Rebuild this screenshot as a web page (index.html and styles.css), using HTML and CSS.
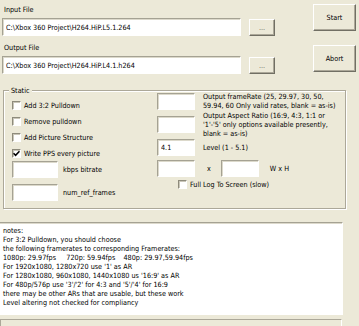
FILE: index.html
```html
<!DOCTYPE html>
<html lang="en">
<head>
    <meta charset="UTF-8">
    <title>H264 Patcher</title>
    <link rel="stylesheet" href="styles.css">
</head>
<body>
    <div class="file-block">
        <div class="file-main">
            <div class="file-label">Input File</div>
            <div class="path-row">
                <input class="textbox path" type="text" value="C:\Xbox 360 Project\H264.HiP.L5.1.264">
                <button class="btn browse" type="button">...</button>
            </div>
        </div>
        <button class="btn action" type="button">Start</button>
    </div>
    <div class="file-block">
        <div class="file-main">
            <div class="file-label">Output File</div>
            <div class="path-row">
                <input class="textbox path" type="text" value="C:\Xbox 360 Project\H264.HiP.L4.1.h264">
                <button class="btn browse" type="button">...</button>
            </div>
        </div>
        <button class="btn action abort" type="button">Abort</button>
    </div>

    <div class="group">
        <span class="group-title">Static</span>
        <div class="group-body">
            <div class="left-col">
                <label class="check"><span class="box"></span>Add 3:2 Pulldown</label>
                <label class="check"><span class="box"></span>Remove pulldown</label>
                <label class="check"><span class="box"></span>Add Picture Structure</label>
                <label class="check"><span class="box"><svg viewBox="0 0 7 7" width="7" height="7"><path d="M0.5 3.2 L2.6 5.3 L6.5 1.2" fill="none" stroke="#000" stroke-width="1.6"/></svg></span>Write PPS every picture</label>
                <div class="field"><input class="textbox small" type="text"><span>kbps bitrate</span></div>
                <div class="field second"><input class="textbox small" type="text"><span>num_ref_frames</span></div>
            </div>
            <div class="right-col">
                <div class="opt rate"><input class="textbox small" type="text"><span>Output frameRate (25, 29.97, 30, 50,<br>59.94, 60 Only valid rates, blank = as-is)</span></div>
                <div class="opt aspect"><input class="textbox small" type="text"><span>Output Aspect Ratio (16:9, 4:3, 1:1 or<br>'1'-'5' only options available presently,<br>blank = as-is)</span></div>
                <div class="opt level"><input class="textbox small" type="text" value="4.1"><span>Level (1 - 5.1)</span></div>
                <div class="opt size"><input class="textbox small" type="text"><span class="times">x</span><input class="textbox small" type="text"><span class="wh">W x H</span></div>
                <label class="check log"><span class="box"></span>Full Log To Screen (slow)</label>
            </div>
        </div>
    </div>

    <div class="notes textbox">notes:
For 3:2 Pulldown, you should choose
the following framerates to corresponding Framerates:
1080p: 29.97fps     720p: 59.94fps    480p: 29.97,59.94fps
For 1920x1080, 1280x720 use '1' as AR
For 1280x1080, 960x1080, 1440x1080 us '16:9' as AR
For 480p/576p use '3'/'2' for 4:3 and '5'/'4' for 16:9
there may be other ARs that are usable, but these work
Level altering not checked for compliancy</div>

    <div class="progress"></div>
</body>
</html>
```

FILE: styles.css
```css
* {
    box-sizing: border-box;
}
body {
    margin: 0;
    width: 359px;
    height: 326px;
    overflow: hidden;
    background: #ECE9D8;
    color: #000;
    font-family: "DejaVu Sans Condensed", "Liberation Sans", sans-serif;
    font-size: 7.2px;
    line-height: 9px;
}
input, button {
    font: inherit;
    color: #000;
    margin: 0;
}
.textbox {
    background: #fff;
    border: 1px solid;
    border-color: #A5A293 #fff #fff #A5A293;
    box-shadow: inset 1px 1px 0 #DCD9CB;
    padding: 0 3px;
    outline: none;
}
.btn {
    background: #ECE9D8;
    border: 1px solid;
    border-color: #fff #716F64 #716F64 #fff;
    box-shadow: inset -1px -1px 0 #ACA899;
    padding: 0;
    cursor: pointer;
}
.file-block {
    display: flex;
    height: 38px;
}
.file-main {
    width: 275px;
    padding-left: 2px;
}
.file-label {
    height: 18px;
    padding: 5px 0 0 2px;
}
.path-row {
    display: flex;
    gap: 8px;
}
.path {
    width: 239px;
    height: 18px;
}
.browse {
    width: 26px;
    height: 17px;
    margin-top: 1px;
    color: #666;
}
.action {
    width: 43px;
    height: 27px;
    margin: 4px 0 0 38px;
}
.abort {
    margin-top: 7px;
}

.group {
    position: relative;
    margin: 14px 13px 0 3px;
    height: 119px;
    border: 1px solid #ACA899;
    box-shadow: 1px 1px 0 #fff, inset 1px 1px 0 #fff;
}
.group-title {
    position: absolute;
    top: -5px;
    left: 5px;
    padding: 0 2px;
    background: #ECE9D8;
}
.group-body {
    display: flex;
    padding-left: 8px;
}
.left-col {
    width: 145px;
    padding-top: 6px;
}
.right-col {
    flex: 1;
    padding-top: 1px;
    white-space: nowrap;
}
.check {
    display: flex;
    align-items: center;
    gap: 3px;
    height: 16px;
}
.box {
    display: flex;
    align-items: center;
    justify-content: center;
    width: 9px;
    height: 9px;
    background: #fff;
    border: 1px solid;
    border-color: #8E8B7C #fff #fff #8E8B7C;
    box-shadow: inset 1px 1px 0 #C9C6B8;
}
.field {
    display: flex;
    align-items: center;
    gap: 5px;
    height: 17px;
}
.field.second {
    margin-top: 6px;
}
.small {
    width: 46px;
    height: 17px;
}
.opt {
    display: flex;
    align-items: center;
    gap: 8px;
}
.opt .small {
    width: 38px;
    flex: none;
}
.rate {
    height: 18px;
}
.aspect {
    height: 27px;
    margin-top: 1px;
}
.level {
    height: 17px;
    margin-top: 1px;
}
.size {
    height: 17px;
    margin-top: 4px;
    gap: 0;
}
.times {
    margin: 0 10px 0 12px;
}
.wh {
    margin-left: 11px;
}
.check.log {
    margin-top: 1px;
    padding-left: 21px;
    height: 13px;
}

.notes {
    margin: 13px 0 0 -2px;
    width: 345px;
    height: 93px;
    padding: 3px 0 0 4px;
    white-space: pre;
    overflow: hidden;
}
.progress {
    margin-top: 4px;
    width: 342px;
    height: 12px;
    border: 1px solid;
    border-color: #ACA899 #fff #fff #ACA899;
}
```
